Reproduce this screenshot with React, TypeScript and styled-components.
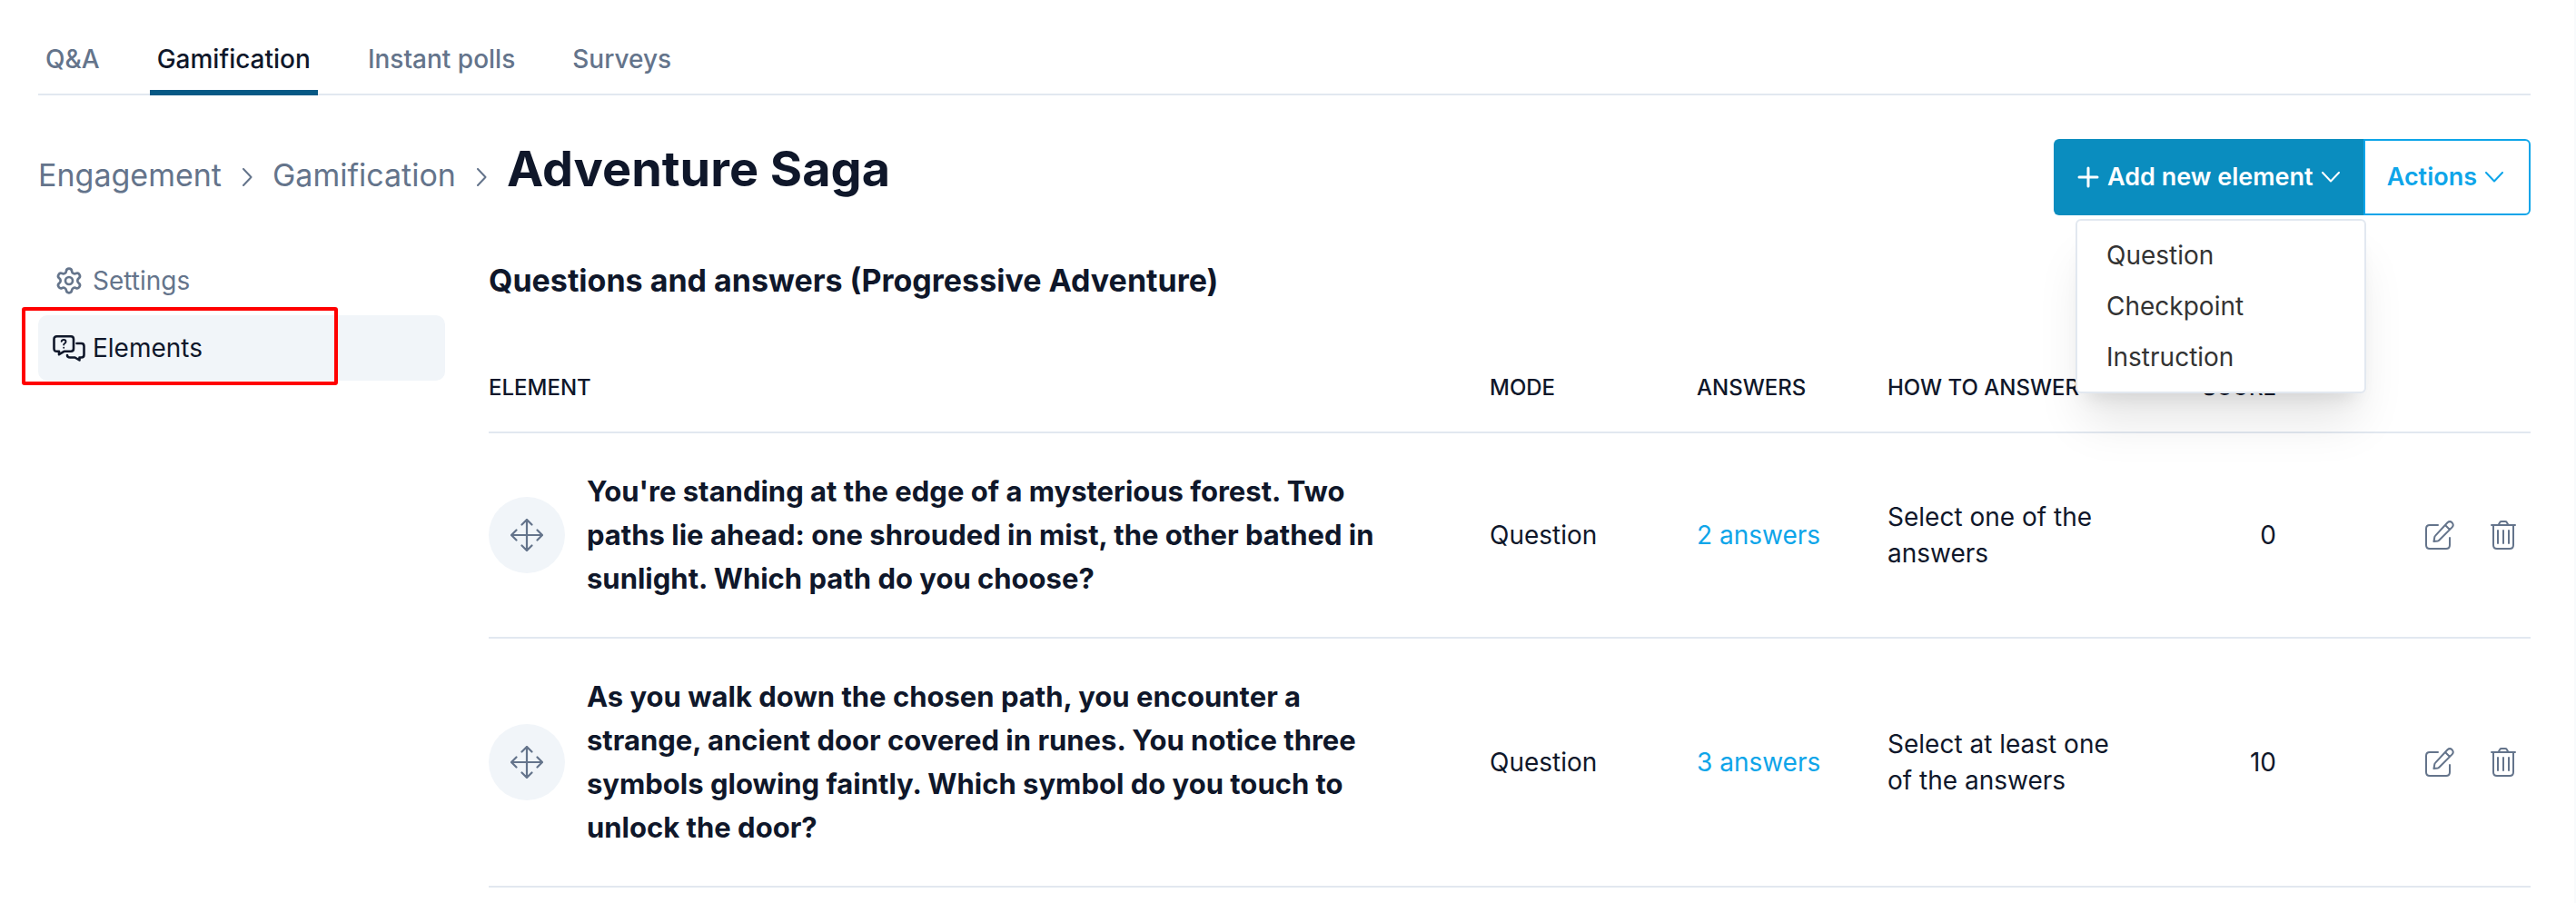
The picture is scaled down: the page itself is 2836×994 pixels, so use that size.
import React from "react";
import styled, { createGlobalStyle, css } from "styled-components";
import { Settings } from "lucide-react";

const GlobalStyle = createGlobalStyle`
  *, *::before, *::after { box-sizing: border-box; }
  html { background: #f8fafc; }
  body {
    margin: 0;
    font-family: Inter, "Liberation Sans", sans-serif;
    font-size: 28px;
    line-height: 40px;
    color: #0f172a;
  }
  button { font: inherit; color: inherit; border: 0; background: none; padding: 0; cursor: pointer; }
  a { color: inherit; text-decoration: none; }
  svg { display: block; flex: none; }
  h1, h2, ul, ol { margin: 0; padding: 0; }
  li { list-style: none; }
`;

const Page = styled.div`
  min-height: 100vh;
  margin-right: 2px;
  padding: 24px 48px 0 42px;
  background: #fff;
`;

const Tabs = styled.nav`
  display: flex;
  gap: 47px;
  border-bottom: 2px solid #e2e8f0;
`;

const Tab = styled.a<{ $active?: boolean }>`
  padding: 21px 8px 14px;
  margin-bottom: -2px;
  font-weight: 500;
  color: #64748b;
  border-bottom: 6px solid transparent;
  ${(p) => p.$active && css`color: #0f172a; border-color: #075985;`}
`;

const Header = styled.header`
  display: flex;
  justify-content: space-between;
  align-items: flex-start;
  margin-top: 48px;
  height: 84px;
`;

const Crumbs = styled.ol`
  display: flex;
  align-items: baseline;
  font-size: 34px;
  line-height: 48px;
  color: #64748b;
`;

const Crumb = styled.li`
  display: flex;
  align-items: baseline;
`;

const Separator = styled.svg`
  margin: 0 22px;
`;

const Title = styled.h1`
  font-size: 54px;
  line-height: 66px;
  font-weight: 700;
  color: #0f172a;
`;

const ButtonGroup = styled.div`
  display: flex;
  position: relative;
`;

const GroupButton = styled.button<{ $primary?: boolean }>`
  display: flex;
  align-items: center;
  gap: 9px;
  height: 84px;
  padding: 0 28px 0 24px;
  font-size: 27px;
  font-weight: 600;
  border: 2px solid #0ea5e9;
  border-radius: 0 6px 6px 0;
  color: #0ea5e9;
  ${(p) => p.$primary && css`
    padding-right: 26px;
    color: #fff;
    background: #0a8dbf;
    border-color: #0a8dbf;
    border-right-width: 0;
    border-radius: 6px 0 0 6px;
  `}
`;

const Menu = styled.ul`
  position: absolute;
  z-index: 2;
  top: 88px;
  left: 24px;
  width: 320px;
  padding: 10px 0;
  background: #fff;
  border: 2px solid #e2e8f0;
  border-radius: 6px;
  box-shadow: 0 40px 50px -10px rgba(0, 0, 0, 0.1), 0 16px 20px -12px rgba(0, 0, 0, 0.1);
`;

const MenuItem = styled.button`
  display: block;
  width: 100%;
  height: 56px;
  padding: 0 32px;
  text-align: left;
  color: #333;
`;

const Body = styled.div`
  display: grid;
  grid-template-columns: 448px minmax(0, 1fr);
  gap: 48px;
  margin-top: 36px;
`;

const Sidebar = styled.nav`
  display: flex;
  flex-direction: column;
  gap: 2px;
`;

const SideItem = styled.div`
  position: relative;
`;

const SideLink = styled.a<{ $active?: boolean }>`
  display: flex;
  align-items: center;
  height: 72px;
  padding-left: 16px;
  gap: 8px;
  border-radius: 10px;
  color: #64748b;
  ${(p) => p.$active && css`color: #0f172a; background: #f1f5f9;`}
`;

const SideIcon = styled.span`
  display: flex;
  justify-content: center;
  width: 36px;
`;

const Highlight = styled.div`
  position: absolute;
  inset: -9px 118px -5px -18px;
  border: 4px solid #f00;
  border-radius: 3px;
  pointer-events: none;
`;

const SectionTitle = styled.h2`
  padding: 12px 0;
  font-size: 34px;
  line-height: 48px;
  font-weight: 700;
`;

const Table = styled.table`
  width: 100%;
  margin-top: 26px;
  border-collapse: collapse;
  table-layout: fixed;
`;

const Row = styled.tr`
  border-bottom: 2px solid #e2e8f0;
`;

const Th = styled.th<{ $right?: boolean }>`
  padding: 32px 0 24px;
  font-size: 24px;
  line-height: 48px;
  font-weight: 500;
  text-transform: uppercase;
  white-space: nowrap;
  text-align: ${(p) => (p.$right ? "right" : "left")};
`;

const Td = styled.td<{ $right?: boolean }>`
  padding: 40px 0;
  vertical-align: middle;
  text-align: ${(p) => (p.$right ? "right" : "left")};
`;

const ElementCell = styled.div`
  display: flex;
  align-items: center;
  gap: 24px;
`;

const Handle = styled.button`
  display: grid;
  place-items: center;
  flex: none;
  width: 84px;
  height: 84px;
  border-radius: 50%;
  background: #f1f5f9;
  color: #64748b;
  cursor: move;
`;

const Prompt = styled.span`
  max-width: 890px;
  font-size: 31px;
  line-height: 48px;
  font-weight: 700;
`;

const AnswersLink = styled.a`
  color: #0ea5e9;
`;

const HowTo = styled.div`
  max-width: 250px;
`;

const RowActions = styled.div`
  display: flex;
  justify-content: flex-end;
  gap: 40px;
  padding-right: 16px;
  color: #64748b;
`;

const Chevron = () => (
  <svg width="20" height="12" viewBox="0 0 20 12" fill="none" stroke="currentColor" strokeWidth="2" strokeLinecap="round" strokeLinejoin="round" aria-hidden="true">
    <path d="M1 1l9 9.5L19 1" />
  </svg>
);

const PlusIcon = () => (
  <svg width="24" height="24" viewBox="0 0 24 24" stroke="currentColor" strokeWidth="3" strokeLinecap="round" aria-hidden="true">
    <path d="M12 2v20M2 12h20" />
  </svg>
);

const CrumbArrow = () => (
  <Separator width="12" height="20" viewBox="0 0 12 20" fill="none" stroke="currentColor" strokeWidth="2" strokeLinecap="round" strokeLinejoin="round" aria-hidden="true">
    <path d="M2 1l8.500 9L2 19" />
  </Separator>
);

const ElementsIcon = () => (
  <svg width="36" height="29" viewBox="0 0 36 29" fill="none" stroke="currentColor" strokeWidth="2.6" strokeLinecap="round" strokeLinejoin="round" aria-hidden="true">
    <path d="M4.500 1.300h15.500q3 0 3 3v10.500q0 3-3 3H12.500L7 21.200v-3.400H4.500q-3 0-3-3V4.300q0-3 3-3z" />
    <path d="M26.500 9H31.500q3 0 3 3v9.500q0 3-3 3H29.500v3l-5-3H19q-3 0-3-2.500" />
    <path d="M9.700 6.800q.3-1.800 2.400-1.800 2.400 0 2.400 2 0 1.300-1.300 2-1 .6-1 1.600M12.200 13.700v.1" strokeWidth="1.9" />
  </svg>
);

const MoveIcon = () => (
  <svg width="36" height="36" viewBox="0 0 36 36" fill="none" stroke="currentColor" strokeWidth="2.2" strokeLinecap="round" strokeLinejoin="round" aria-hidden="true">
    <path d="M18 1v34M1 18h34M12.500 6.500L18 1l5.500 5.500M12.500 29.500L18 35l5.500-5.500M6.500 12.500L1 18l5.500 5.500M29.500 12.500L35 18l-5.500 5.500" />
  </svg>
);

const EditIcon = () => (
  <svg width="32" height="32" viewBox="0 0 32 32" fill="none" stroke="currentColor" strokeWidth="2" strokeLinecap="round" strokeLinejoin="round" aria-hidden="true">
    <path d="M14 5H5q-4 0-4 4v18q0 4 4 4h18q4 0 4-4v-8" />
    <path d="M24.500 2.300q2.500-2.300 5.100 0 2.300 2.600 0 5.100L15.500 21.500q-.7.700-1.700.9L9.500 23l.8-4.700q.2-1 .9-1.700zM22 5l5 5" />
  </svg>
);

const TrashIcon = () => (
  <svg width="28" height="32" viewBox="0 0 28 32" fill="none" stroke="currentColor" strokeWidth="2" strokeLinecap="round" strokeLinejoin="round" aria-hidden="true">
    <path d="M1 5h26M8.500 5l1.700-3q.6-1 1.800-1h4q1.200 0 1.800 1l1.700 3M3 5v22q0 4 4 4h14q4 0 4-4V5M8 11v14M14 11v14M20 11v14" />
  </svg>
);

const tabs = ["Q&A", "Gamification", "Instant polls", "Surveys"];
const crumbs = ["Engagement", "Gamification"];
const menuItems = ["Question", "Checkpoint", "Instruction"];

const rows = [
  {
    prompt: "You're standing at the edge of a mysterious forest. Two paths lie ahead: one shrouded in mist, the other bathed in sunlight. Which path do you choose?",
    mode: "Question",
    answers: "2 answers",
    howTo: "Select one of the answers",
    score: 0,
  },
  {
    prompt: "As you walk down the chosen path, you encounter a strange, ancient door covered in runes. You notice three symbols glowing faintly. Which symbol do you touch to unlock the door?",
    mode: "Question",
    answers: "3 answers",
    howTo: "Select at least one of the answers",
    score: 10,
  },
];

export default function App() {
  return (
    <>
      <GlobalStyle />
      <Page>
        <Tabs>
          {tabs.map((t) => (
            <Tab key={t} href="#" $active={t === "Gamification"}>{t}</Tab>
          ))}
        </Tabs>

        <Header>
          <Crumbs>
            {crumbs.map((c) => (
              <Crumb key={c}>
                <a href="#">{c}</a>
                <CrumbArrow />
              </Crumb>
            ))}
            <Crumb><Title>Adventure Saga</Title></Crumb>
          </Crumbs>
          <ButtonGroup>
            <GroupButton type="button" $primary aria-haspopup="menu" aria-expanded="true">
              <PlusIcon />
              Add new element
              <Chevron />
            </GroupButton>
            <GroupButton type="button" aria-haspopup="menu">
              Actions
              <Chevron />
            </GroupButton>
            <Menu>
              {menuItems.map((m) => (
                <li key={m}><MenuItem type="button">{m}</MenuItem></li>
              ))}
            </Menu>
          </ButtonGroup>
        </Header>

        <Body>
          <Sidebar>
            <SideItem>
              <SideLink href="#"><SideIcon><Settings size={32} strokeWidth={2} /></SideIcon>Settings</SideLink>
            </SideItem>
            <SideItem>
              <SideLink href="#" $active><SideIcon><ElementsIcon /></SideIcon>Elements</SideLink>
              <Highlight />
            </SideItem>
          </Sidebar>

          <main>
            <SectionTitle>Questions and answers (Progressive Adventure)</SectionTitle>
            <Table>
              <colgroup>
                <col />
                <col style={{ width: 228 }} />
                <col style={{ width: 210 }} />
                <col style={{ width: 250 }} />
                <col style={{ width: 178 }} />
                <col style={{ width: 280 }} />
              </colgroup>
              <thead>
                <Row>
                  <Th>Element</Th>
                  <Th>Mode</Th>
                  <Th>Answers</Th>
                  <Th>How to answer</Th>
                  <Th $right>Score</Th>
                  <Th aria-label="Row actions" />
                </Row>
              </thead>
              <tbody>
                {rows.map((r) => (
                  <Row key={r.prompt}>
                    <Td>
                      <ElementCell>
                        <Handle type="button" aria-label="Move"><MoveIcon /></Handle>
                        <Prompt>{r.prompt}</Prompt>
                      </ElementCell>
                    </Td>
                    <Td>{r.mode}</Td>
                    <Td><AnswersLink href="#">{r.answers}</AnswersLink></Td>
                    <Td><HowTo>{r.howTo}</HowTo></Td>
                    <Td $right>{r.score}</Td>
                    <Td>
                      <RowActions>
                        <button type="button" aria-label="Edit"><EditIcon /></button>
                        <button type="button" aria-label="Delete"><TrashIcon /></button>
                      </RowActions>
                    </Td>
                  </Row>
                ))}
              </tbody>
            </Table>
          </main>
        </Body>
      </Page>
    </>
  );
}
